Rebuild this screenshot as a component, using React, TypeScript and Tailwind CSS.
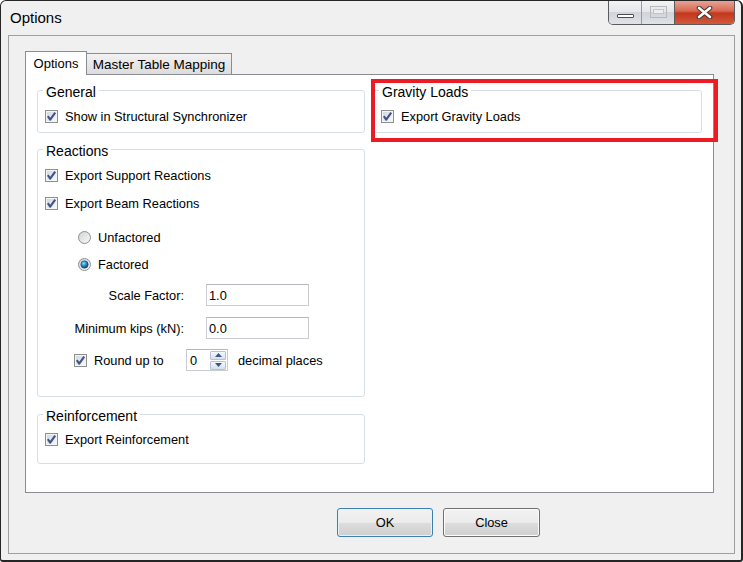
import type { ReactNode } from "react";

// ─── small Win7 controls ────────────────────────────────────────────────────

function CheckBox() {
  return (
    <svg width="13" height="13" viewBox="0 0 13 13" className="shrink-0">
      <defs>
        <linearGradient id="cbFill" x1="0" y1="0" x2="1" y2="1">
          <stop offset="0" stopColor="#d3d7de" />
          <stop offset="1" stopColor="#f7f8f9" />
        </linearGradient>
      </defs>
      <rect x="0.5" y="0.5" width="12" height="12" fill="#f4f4f4" stroke="#8e8f8f" />
      <rect x="2" y="2" width="9" height="9" fill="url(#cbFill)" />
      <path d="M2.8 6.2 L5.2 9.6 L10.2 2.6" fill="none" stroke="#3f5489" strokeWidth="2.1" strokeLinejoin="round" />
    </svg>
  );
}

function Radio({ checked }: { checked?: boolean }) {
  return (
    <svg width="13" height="13" viewBox="0 0 13 13" className="shrink-0">
      <defs>
        <linearGradient id="rbFill" x1="0" y1="0" x2="1" y2="1">
          <stop offset="0" stopColor="#cfd1d4" />
          <stop offset="1" stopColor="#fbfbfb" />
        </linearGradient>
        <radialGradient id="rbDot" cx="0.4" cy="0.35" r="0.7">
          <stop offset="0" stopColor="#8ee0ff" />
          <stop offset="0.45" stopColor="#2a8fc9" />
          <stop offset="1" stopColor="#0b3557" />
        </radialGradient>
      </defs>
      <circle cx="6.5" cy="6.5" r="6" fill="url(#rbFill)" stroke="#8e8f8f" />
      {checked && <circle cx="6.5" cy="6.5" r="3.7" fill="url(#rbDot)" stroke="#1c4b72" strokeWidth="0.6" />}
    </svg>
  );
}

function Check({ label, className = "" }: { label: string; className?: string }) {
  return (
    <div className={`flex h-[20px] items-center gap-[7px] ${className}`}>
      <CheckBox />
      <span>{label}</span>
    </div>
  );
}

function Group({ title, className = "", children }: { title: string; className?: string; children: ReactNode }) {
  return (
    <div className={`relative rounded-[3px] border border-[#d5dfe5] ${className}`}>
      <span className="absolute left-[5px] top-[-7px] bg-white px-[3px] text-[14px] leading-[16px]">{title}</span>
      {children}
    </div>
  );
}

function TextBox({ value }: { value: string }) {
  return (
    <div className="flex h-[22px] w-[103px] items-center border border-[#c9ccd2] border-t-[#b3b6bc] bg-white pl-[2px]">
      {value}
    </div>
  );
}

function Spinner({ value }: { value: string }) {
  return (
    <div className="flex h-[22px] w-[42px] items-center border border-[#c9ccd2] border-t-[#b3b6bc] bg-white pl-[3px]">
      <span className="flex-1">{value}</span>
      <div className="mr-[1px] flex h-[19px] w-[16px] flex-col gap-px">
        <div className="flex flex-1 items-center justify-center rounded-[1px] border border-[#b5c2d3] bg-[linear-gradient(#f4f8fc,#d6e1ee)]">
          <svg width="7" height="4" viewBox="0 0 7 4"><path d="M0 4 L3.5 0 L7 4 Z" fill="#3b5a82" /></svg>
        </div>
        <div className="flex flex-1 items-center justify-center rounded-[1px] border border-[#b5c2d3] bg-[linear-gradient(#f4f8fc,#d6e1ee)]">
          <svg width="7" height="4" viewBox="0 0 7 4"><path d="M0 0 L3.5 4 L7 0 Z" fill="#3b5a82" /></svg>
        </div>
      </div>
    </div>
  );
}

// ─── window caption buttons ─────────────────────────────────────────────────

function CaptionButtons() {
  return (
    <div className="absolute right-[6px] top-[-1px] flex h-[25px] overflow-hidden rounded-b-[5px] border border-t-0 border-[#5b5b5b]">
      <div className="flex w-[33px] items-center justify-center border-r border-[#9a9a9a] bg-[linear-gradient(#f3f4f6_0%,#e4e6ea_50%,#d0d4da_51%,#dfe2e7_100%)]">
        <div className="mt-[8px] h-[4px] w-[17px] rounded-[1px] border border-[#4b4b4b] bg-white" />
      </div>
      <div className="flex w-[33px] items-center justify-center border-r border-[#5b5b5b] bg-[linear-gradient(#f3f4f6_0%,#e4e6ea_50%,#d0d4da_51%,#dfe2e7_100%)]">
        <div className="flex h-[12px] w-[17px] items-start justify-center border border-[#b8b8b8] pt-[2px]">
          <div className="h-[5px] w-[11px] border border-[#c4c4c4] bg-[#eeeeee]" />
        </div>
      </div>
      <div className="flex w-[59px] items-center justify-center bg-[linear-gradient(#e9a89a_0%,#d96a55_45%,#c3371d_55%,#d3583c_100%)]">
        <svg width="17" height="13" viewBox="0 0 17 13">
          <path d="M3 2 L14 11 M14 2 L3 11" stroke="#3a3a3a" strokeWidth="4.6" strokeLinecap="round" />
          <path d="M3 2 L14 11 M14 2 L3 11" stroke="#ffffff" strokeWidth="2.6" strokeLinecap="round" />
        </svg>
      </div>
    </div>
  );
}

// ─── Options dialog ─────────────────────────────────────────────────────────

export default function App() {
  return (
    <div className="relative flex h-[562px] w-[743px] flex-col overflow-hidden rounded-t-[6px] rounded-b-[3px] border border-r-2 border-b-2 border-[#252525] bg-[#f0f0f0] font-['Liberation_Sans',Arial,sans-serif] text-[12.8px] leading-[15px] text-black">
      {/* title bar */}
      <div className="h-[34px] pl-[9px] pt-[8px] text-[15px] leading-[17px]">Options</div>
      <CaptionButtons />

      {/* client area */}
      <div className="mx-[6px] mb-[6px] ml-[7px] flex flex-1 flex-col border border-[#a0a0a0] bg-[#f0f0f0] pl-[16px] pr-[20px] pt-[15px]">
        <div className="flex h-[23px] items-end">
          <div className="relative z-10 -mb-px flex h-[24px] w-[62px] items-center justify-center border border-b-0 border-[#898c95] bg-white pb-[1px] text-[13px]">
            Options
          </div>
          <div className="-ml-px flex h-[21px] w-[146px] items-center justify-center border border-b-0 border-[#898c95] bg-[linear-gradient(#f2f2f2,#dcdcdc)] text-[13.5px]">
            Master Table Mapping
          </div>
        </div>

        <div className="relative flex h-[419px] gap-[8px] border border-[#898c95] bg-white pl-[11px] pt-[15px]">
          {/* left column */}
          <div className="flex w-[328px] flex-col">
            <Group title="General" className="h-[43px] pl-[7px] pt-[15px]">
              <Check label="Show in Structural Synchronizer" />
            </Group>

            <Group title="Reactions" className="mt-[16px] h-[248px] pl-[7px] pt-[15px]">
              <Check label="Export Support Reactions" />
              <Check label="Export Beam Reactions" className="mt-[8px]" />
              <div className="ml-[33px] mt-[14px] flex h-[20px] items-center gap-[7px]">
                <Radio />
                <span>Unfactored</span>
              </div>
              <div className="ml-[33px] mt-[7px] flex h-[20px] items-center gap-[7px]">
                <Radio checked />
                <span>Factored</span>
              </div>
              <div className="-ml-[7px] mt-[10px] flex h-[22px] items-center">
                <span className="w-[146px] text-right">Scale Factor:</span>
                <div className="ml-[22px]">
                  <TextBox value="1.0" />
                </div>
              </div>
              <div className="-ml-[7px] mt-[11px] flex h-[22px] items-center">
                <span className="w-[146px] text-right">Minimum kips (kN):</span>
                <div className="ml-[22px]">
                  <TextBox value="0.0" />
                </div>
              </div>
              <div className="ml-[29px] mt-[10px] flex h-[22px] items-center">
                <CheckBox />
                <span className="ml-[7px] w-[92px]">Round up to</span>
                <Spinner value="0" />
                <span className="ml-[10px]">decimal places</span>
              </div>
            </Group>

            <Group title="Reinforcement" className="mt-[17px] h-[50px] pl-[7px] pt-[14px]">
              <Check label="Export Reinforcement" />
            </Group>
          </div>

          {/* right column */}
          <div className="flex w-[329px] flex-col">
            <Group title="Gravity Loads" className="h-[43px] pl-[7px] pt-[15px]">
              <Check label="Export Gravity Loads" />
            </Group>
          </div>

          {/* highlight */}
          <div className="absolute left-[345px] top-[4px] h-[63px] w-[347px] border-[4px] border-[#ed1c24]" />
        </div>

        <div className="mt-[15px] flex gap-[10px] pl-[312px]">
          <button className="h-[29px] w-[96px] rounded-[3px] border border-[#3c7fb1] bg-[linear-gradient(#f2f2f2_0%,#ebebeb_50%,#dddddd_51%,#cfcfcf_100%)] shadow-[inset_0_0_0_1px_#e3f3fc]">
            OK
          </button>
          <button className="h-[29px] w-[97px] rounded-[3px] border border-[#707070] bg-[linear-gradient(#f2f2f2_0%,#ebebeb_50%,#dddddd_51%,#cfcfcf_100%)] shadow-[inset_0_0_0_1px_#fcfcfc]">
            Close
          </button>
        </div>
      </div>
    </div>
  );
}
